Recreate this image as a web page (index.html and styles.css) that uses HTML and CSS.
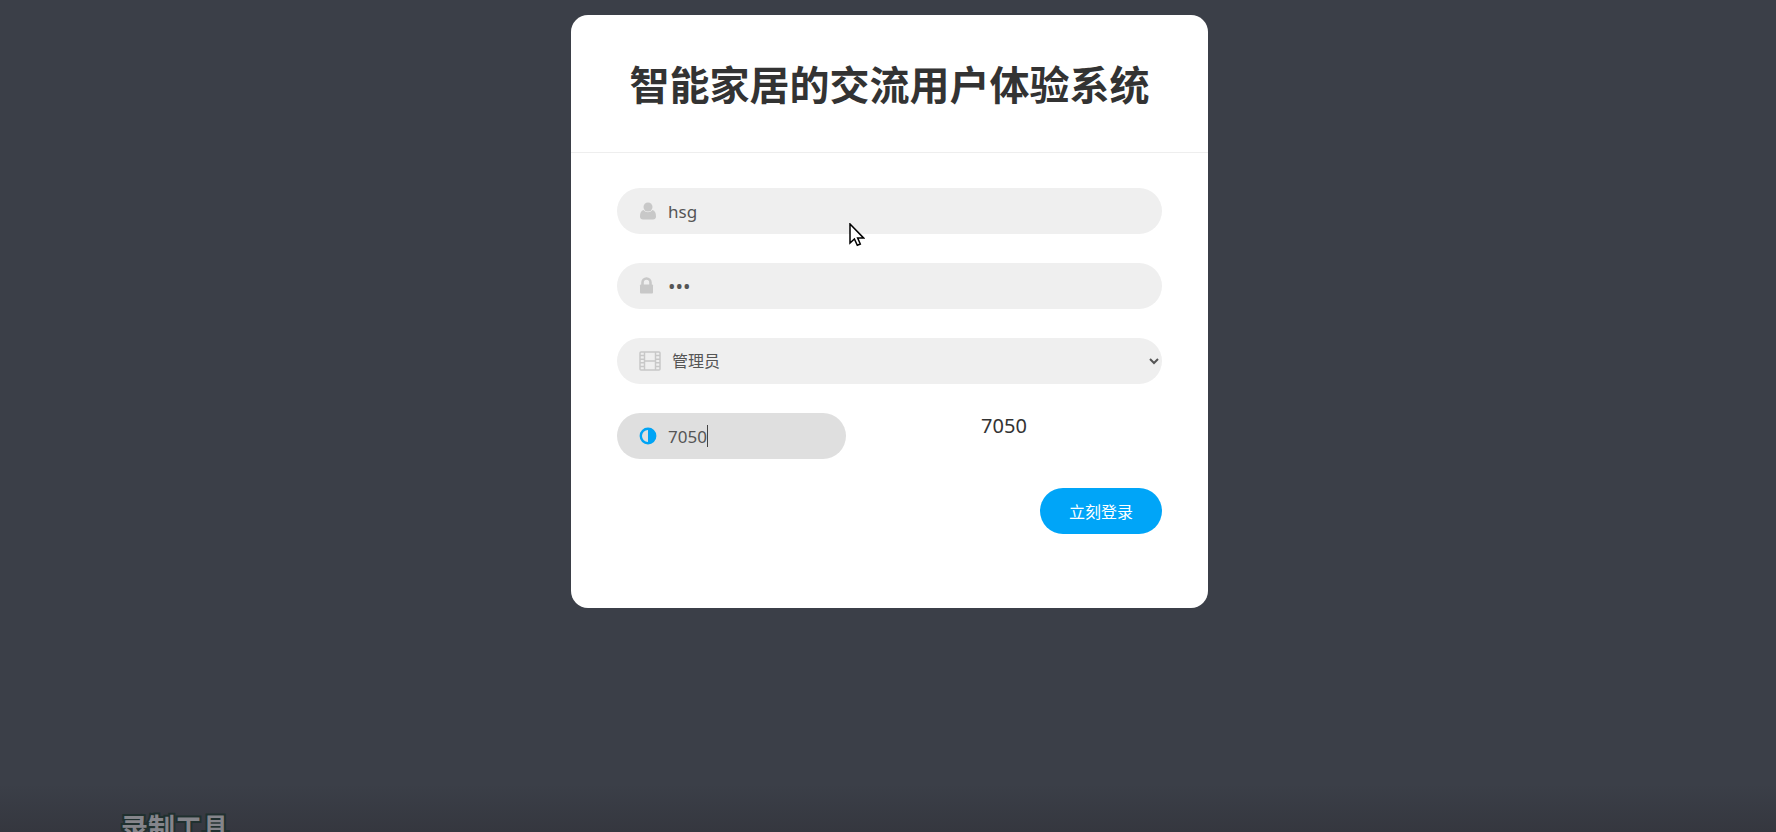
FILE: index.html
```html
<!DOCTYPE html>
<html lang="zh-CN">
<head>
    <meta charset="UTF-8">
    <meta name="viewport" content="width=device-width, initial-scale=1.0">
    <title>智能家居的交流用户体验系统</title>
    <link rel="stylesheet" href="styles.css">
</head>
<body>
    <main class="login">
        <header class="login-header">
            <h1>智能家居的交流用户体验系统</h1>
        </header>
        <form class="login-form">
            <div class="field">
                <label for="username" aria-label="用户名">
                    <svg class="icon" width="18" height="18" viewBox="0 0 18 18" fill="currentColor">
                        <circle cx="9" cy="5" r="4.5"/>
                        <path d="M4.6 8C2 8.500 1 11 1 14.500C1 16.500 2.200 17.500 4 17.500H14C15.800 17.500 17 16.500 17 14.500C17 11 16 8.500 13.400 8C12.200 9.500 10.700 10.200 9 10.200S5.800 9.500 4.600 8Z"/>
                    </svg>
                </label>
                <input type="text" id="username" value="hsg">
            </div>
            <div class="field">
                <label for="password" aria-label="密码">
                    <svg class="icon" width="18" height="18" viewBox="0 0 18 18">
                        <path d="M3.500 9V5.500a4 4 0 0 1 8 0V9" fill="none" stroke="currentColor" stroke-width="2.600"/>
                        <rect x="1" y="7.500" width="13" height="9" rx="1" fill="currentColor"/>
                    </svg>
                </label>
                <input type="password" id="password" value="123">
            </div>
            <div class="field">
                <label for="role" aria-label="角色">
                    <svg class="icon" width="22" height="20" viewBox="0 0 22 20" fill="none" stroke="currentColor" stroke-width="1.500">
                        <rect x="1" y="1" width="20" height="18" rx="1"/>
                        <path d="M5.500 1V19M16.500 1V19M5.500 10H16.500"/>
                        <path d="M1 4.600H5.500M1 8.200H5.500M1 11.800H5.500M1 15.400H5.500M16.500 4.600H21M16.500 8.200H21M16.500 11.800H21M16.500 15.400H21"/>
                    </svg>
                </label>
                <select id="role">
                    <option>管理员</option>
                    <option>用户</option>
                </select>
            </div>
            <div class="code-row">
                <div class="field field-active">
                    <label for="code" aria-label="验证码">
                        <svg class="icon" width="18" height="18" viewBox="0 0 18 18">
                            <circle cx="9" cy="9" r="7.200" fill="none" stroke="currentColor" stroke-width="2.400"/>
                            <path d="M9 2A7 7 0 0 1 9 16Z" fill="currentColor"/>
                        </svg>
                    </label>
                    <input type="text" id="code" value="7050">
                    <span class="caret"></span>
                </div>
                <output class="code" for="code">7050</output>
            </div>
            <button type="submit">立刻登录</button>
        </form>
    </main>

    <div class="recorder">录制工具</div>
    <svg class="cursor" width="16" height="24" viewBox="0 0 16 24">
        <path d="M1 1V20L5.400 16L8.300 22.300L11.300 21L8.600 14.900H14.500Z" fill="#fff" stroke="#000" stroke-width="1.500"/>
    </svg>
</body>
</html>
```

FILE: styles.css
```css
* {
    box-sizing: border-box;
}
body {
    margin: 0;
    min-height: 100vh;
    padding: 15px 0 15px 3px;
    position: relative;
    overflow: hidden;
    background: linear-gradient(to top, #35373f, #3b3f48 48px);
    font-family: "Noto Sans", "Noto Sans CJK SC", sans-serif;
    color: #333;
}
.login {
    width: 100%;
    max-width: 637px;
    margin: 0 auto;
    background: #fff;
    border-radius: 17px;
}
.login-header {
    padding: 41px 46px 38px;
    border-bottom: 1px solid #eee;
    text-align: center;
}
h1 {
    margin: 0;
    font-size: 40px;
    line-height: 58px;
    white-space: nowrap;
}
.login-form {
    display: flex;
    flex-direction: column;
    gap: 29px;
    padding: 35px 46px 74px;
}
.field {
    display: flex;
    align-items: center;
    position: relative;
    height: 46px;
    border-radius: 23px;
    background: #efefef;
    color: #c8c8c8;
    overflow: hidden;
}
.field label {
    display: flex;
    padding: 0 11px 0 22px;
}
.icon {
    display: block;
}
.field input,
.field select {
    flex: 1;
    min-width: 0;
    height: 100%;
    padding: 0;
    border: 0;
    outline: 0;
    background: none;
    color: #555;
    font-family: inherit;
    font-size: 17px;
}
.field select {
    margin-left: -4px;
    font-size: 16px;
}
.field input[type="password"] {
    font-size: 20px;
}
.code-row {
    display: grid;
    grid-template-columns: 42% 1fr;
}
.field-active {
    background: #dfdfdf;
    color: #00a4f5;
}
.caret {
    position: absolute;
    top: 12px;
    left: 90px;
    width: 1px;
    height: 22px;
    background: #444;
}
.code {
    font-size: 20px;
    line-height: 26px;
    text-align: center;
}
button {
    align-self: flex-end;
    height: 46px;
    padding: 0 29px;
    border: 0;
    border-radius: 23px;
    background: #00a5f8;
    color: #fff;
    font-family: inherit;
    font-size: 16px;
}
.recorder {
    position: absolute;
    left: 121px;
    bottom: -14px;
    color: #85858b;
    font-size: 27px;
    font-weight: bold;
    line-height: 36px;
    -webkit-text-stroke: 4px #20302f;
    paint-order: stroke fill;
}
.cursor {
    position: absolute;
    left: 849px;
    top: 223px;
}
```
